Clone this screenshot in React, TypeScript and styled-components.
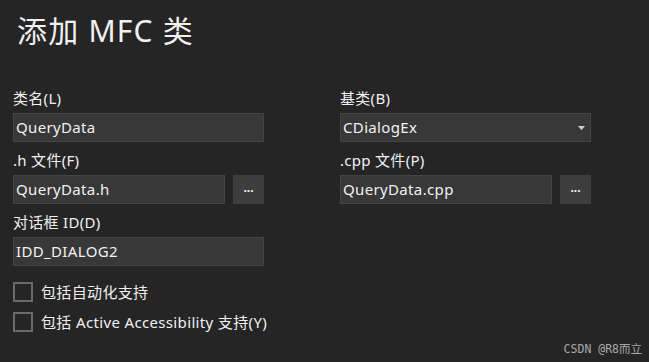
import React, {useState} from 'react';
import styled, {createGlobalStyle} from "styled-components";

const GlobalStyle = createGlobalStyle`
    html, body {
        margin: 0;
        padding: 0;
        background: #252526;
    }
    body {
        width: 649px;
        height: 362px;
        overflow: hidden;
        font-family: "Noto Sans", "Noto Sans CJK SC", sans-serif;
        color: #f1f1f1;
    }
`

type FieldPropsType = {
    label: string
    value: string
    browse?: boolean
    select?: boolean
}

const Field = (props: FieldPropsType) => {
    const [value, setValue] = useState(props.value);
    return (
        <Group>
            <Label>{props.label}</Label>
            <Row>
                {props.select
                    ? <SelectBox>
                        <span>{value}</span>
                        <Arrow width="7" height="4" viewBox="0 0 7 4">
                            <path d="M0 0 H7 L3.5 4 Z" fill="#d0d0d0"/>
                        </Arrow>
                    </SelectBox>
                    : <TextInput value={value} onChange={e => setValue(e.currentTarget.value)}/>
                }
                {props.browse && <Browse>...</Browse>}
            </Row>
        </Group>
    )
}

export default function App() {
    const [auto, setAuto] = useState(false);
    const [access, setAccess] = useState(false);

    return (
        <Page>
            <GlobalStyle/>
            <Title>添加 MFC 类</Title>
            <Form>
                <Field label="类名(L)" value="QueryData"/>
                <Field label="基类(B)" value="CDialogEx" select/>
                <Field label=".h 文件(F)" value="QueryData.h" browse/>
                <Field label=".cpp 文件(P)" value="QueryData.cpp" browse/>
                <Field label="对话框 ID(D)" value="IDD_DIALOG2"/>
            </Form>
            <Checks>
                <Check onClick={() => setAuto(!auto)}>
                    <Box checked={auto}/>
                    <span>包括自动化支持</span>
                </Check>
                <Check onClick={() => setAccess(!access)}>
                    <Box checked={access}/>
                    <span>包括 Active Accessibility 支持(Y)</span>
                </Check>
            </Checks>
            <Watermark>CSDN @R8而立</Watermark>
        </Page>
    );
}

const Page = styled.div`
    position: relative;
    width: 649px;
    height: 362px;
    box-sizing: border-box;
    padding: 11px 0 0 13px;
`

const Title = styled.h1`
    margin: 0 0 36px 4px;
    font-size: 30px;
    line-height: 40px;
    font-weight: 400;
    letter-spacing: 1.2px;
`

const Form = styled.div`
    display: grid;
    grid-template-columns: 251px 251px;
    column-gap: 76px;
`

const Group = styled.div`
    display: flex;
    flex-direction: column;
    margin-bottom: 7px;
`

const Label = styled.div`
    font-size: 15px;
    line-height: 22px;
    height: 22px;
    margin-bottom: 4px;
    white-space: nowrap;
    letter-spacing: 0.3px;
`

const Row = styled.div`
    display: flex;
    gap: 8px;
`

const TextInput = styled.input`
    flex: 1;
    min-width: 0;
    height: 29px;
    box-sizing: border-box;
    margin: 0;
    padding: 0 0 1px 2px;
    background: #383838;
    border: 1px solid #444446;
    color: #f1f1f1;
    font-family: "Noto Sans", "Noto Sans CJK SC", sans-serif;
    font-size: 15px;
    letter-spacing: 0.35px;
    outline: none;
`

const SelectBox = styled.div`
    flex: 1;
    height: 29px;
    box-sizing: border-box;
    display: flex;
    align-items: center;
    justify-content: space-between;
    padding: 0 5px 1px 2px;
    background: #383838;
    border: 1px solid #444446;
    font-size: 15px;
    letter-spacing: 0.35px;
`

const Arrow = styled.svg`
    display: block;
    margin-bottom: -1px;
`

const Browse = styled.button`
    width: 31px;
    height: 29px;
    padding: 0 0 4px;
    margin: 0;
    border: none;
    background: #3e3e3e;
    color: #f1f1f1;
    font-family: "Noto Sans", sans-serif;
    font-size: 12px;
    font-weight: 700;
    letter-spacing: 0;
`

const Checks = styled.div`
    display: flex;
    flex-direction: column;
    gap: 10px;
    margin-top: 9px;
`

const Check = styled.label`
    display: flex;
    align-items: center;
    gap: 8px;
    font-size: 15px;
    line-height: 20px;
    letter-spacing: 0.35px;
    cursor: default;
`

const Box = styled.span<{ checked: boolean }>`
    width: 20px;
    height: 20px;
    box-sizing: border-box;
    border: 2px solid #6a6a6a;
    background: ${p => p.checked ? "#3e3e3e" : "transparent"};
`

const Watermark = styled.div`
    position: absolute;
    right: 7px;
    bottom: 6px;
    font-family: "DejaVu Sans Mono", "Noto Sans CJK SC", monospace;
    font-size: 11.5px;
    color: #a8a8a8;
`
